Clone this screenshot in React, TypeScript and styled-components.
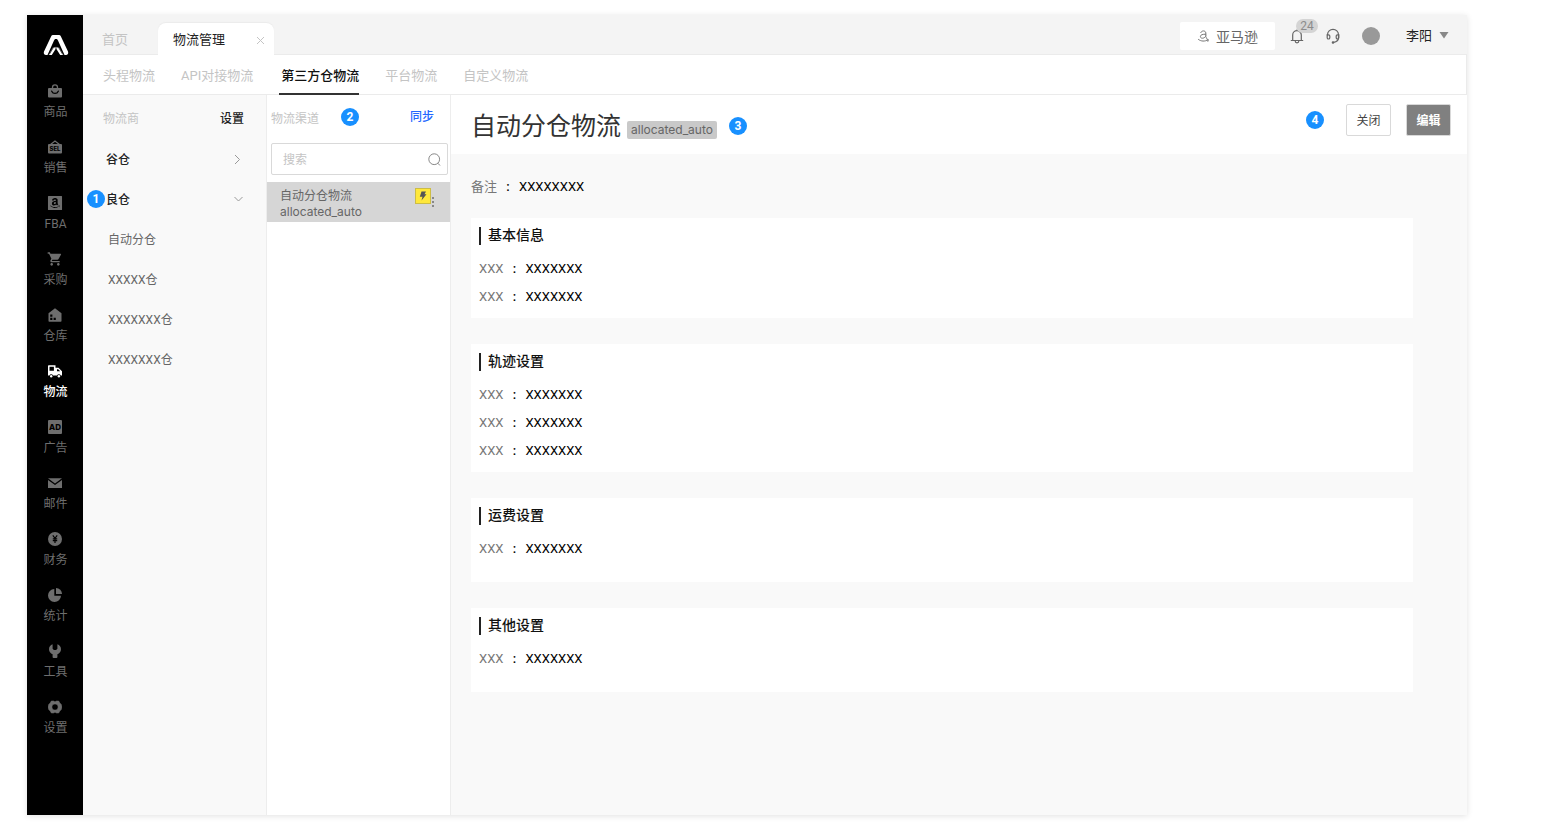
import React from 'react';
import styled, { createGlobalStyle, css } from 'styled-components';
import { AiFillAmazonSquare } from 'react-icons/ai';
import { MdShoppingCart } from 'react-icons/md';

const GlobalStyle = createGlobalStyle`
  *, *::before, *::after { box-sizing: border-box; }
  body {
    margin: 0;
    background: #fff;
    color: #222;
    font-family: Roboto, "Noto Sans CJK SC", sans-serif;
    font-size: 12px;
    line-height: 16px;
  }
  button, input { font: inherit; color: inherit; }
  button { padding: 0; border: 0; background: none; cursor: pointer; }
  a { color: inherit; text-decoration: none; }
  h1, h2, dl, dd, dt { margin: 0; padding: 0; }
  svg { display: block; flex: none; }
`;

const Page = styled.div`
  padding: 15px 98px 22px 27px;
`;

const Frame = styled.div`
  display: flex;
  min-height: calc(100vh - 37px);
  background: #f9f9f9;
  box-shadow: 0 1px 6px rgba(0, 0, 0, 0.12);
`;

const Rail = styled.nav`
  flex: none;
  width: 56px;
  background: #000;
`;

const LogoLink = styled.a`
  display: flex;
  justify-content: center;
  height: 58px;
  padding: 20px 0 0 1px;
`;

const RailLink = styled.a<{ $active?: boolean }>`
  display: flex;
  flex-direction: column;
  align-items: center;
  gap: 6px;
  height: 56px;
  padding: 11px 0 0 1px;
  color: ${(p) => (p.$active ? '#fff' : '#6e6e6e')};
  font-weight: ${(p) => (p.$active ? 500 : 400)};
`;

const RailIcon = styled.span`
  display: flex;
  align-items: center;
  justify-content: center;
  width: 14px;
  height: 14px;
  margin-right: 1px;
`;

const Workspace = styled.div`
  display: flex;
  flex: 1;
  flex-direction: column;
  min-width: 0;
`;

const TopBar = styled.header`
  display: flex;
  justify-content: space-between;
  height: 40px;
  background: #f4f4f4;
  border-bottom: 1px solid #ebebeb;
`;

const PageTabs = styled.div`
  display: flex;
  align-items: flex-end;
  height: 40px;
`;

const HomeTab = styled.a`
  width: 75px;
  padding-left: 19px;
  color: #c4c4c4;
  font-size: 13px;
  line-height: 30px;
`;

const OpenTab = styled.div`
  display: flex;
  align-items: center;
  justify-content: space-between;
  width: 116px;
  height: 32px;
  padding: 2px 9px 0 15px;
  border-radius: 8px 8px 0 0;
  background: #fff;
  box-shadow: 0 -1px 1px #ebebeb;
  font-size: 13px;
`;

const TopTools = styled.div`
  display: flex;
  align-items: center;
  padding: 2px 18px 0 0;
  color: #666;
`;

const StoreButton = styled.button`
  display: flex;
  align-items: center;
  justify-content: center;
  gap: 6px;
  width: 95px;
  height: 28px;
  margin-right: 15px;
  padding-top: 3px;
  border-radius: 2px;
  background: #fff;
  font-size: 14px;
`;

const IconButton = styled.button`
  position: relative;
  width: 16px;
  height: 16px;
  margin-right: 20px;
`;

const CountBadge = styled.span`
  position: absolute;
  top: -9px;
  left: 6px;
  width: 22px;
  border-radius: 7px;
  background: #d4d4d4;
  color: #8c8c8c;
  line-height: 14px;
`;

const Avatar = styled.span`
  width: 18px;
  height: 18px;
  margin-right: 26px;
  border-radius: 50%;
  background: #999;
`;

const UserButton = styled.button`
  display: flex;
  align-items: center;
  gap: 7px;
  color: #222;
  font-size: 13px;
`;

const SubNav = styled.nav`
  display: flex;
  gap: 26px;
  height: 40px;
  padding-left: 20px;
  border: solid #ebebeb;
  border-width: 0 1px 1px 0;
  background: #fff;
`;

const SubLink = styled.a<{ $active?: boolean }>`
  height: 40px;
  color: #c4c4c4;
  font-size: 13px;
  line-height: 42px;
  ${(p) =>
    p.$active &&
    css`
      padding-left: 2px;
      border-bottom: 2px solid #333;
      color: #111;
      font-weight: 500;
    `}
`;

const Columns = styled.div`
  display: flex;
  flex: 1;
`;

const Column = styled.aside<{ $white?: boolean }>`
  flex: none;
  width: 184px;
  border-right: 1px solid #ededed;
  background: ${(p) => (p.$white ? '#fff' : '#f9f9f9')};
`;

const ColumnHead = styled.div<{ $left: number; $right: number }>`
  display: flex;
  align-items: center;
  gap: 22px;
  height: 44px;
  padding: 0 ${(p) => p.$right}px 0 ${(p) => p.$left}px;
`;

const Muted = styled.span`
  padding-top: 4px;
  color: #c4c4c4;
`;

const TextButton = styled.button<{ $primary?: boolean }>`
  margin-left: auto;
  padding-top: ${(p) => (p.$primary ? 0 : 4)}px;
  color: ${(p) => (p.$primary ? '#2468ff' : '#222')};
  font-weight: 500;
`;

const StepDot = styled.span`
  display: inline-block;
  flex: none;
  width: 18px;
  height: 18px;
  border-radius: 50%;
  background: #1890ff;
  color: #fff;
  font-weight: 700;
  line-height: 18px;
  text-align: center;
`;

const PinnedDot = styled(StepDot)`
  position: absolute;
  left: 4px;
  top: 11px;
`;

const ProviderRow = styled.button`
  position: relative;
  display: flex;
  align-items: center;
  justify-content: space-between;
  width: 100%;
  height: 40px;
  padding: 0 23px;
  font-weight: 500;
`;

const ProviderName = styled.span`
  padding-top: 2px;
`;

const WarehouseLink = styled.a`
  display: block;
  height: 40px;
  padding-left: 25px;
  color: #666;
  line-height: 42px;
`;

const SearchBox = styled.label`
  display: flex;
  align-items: center;
  height: 32px;
  margin: 4px 2px 7px 4px;
  padding: 0 6px 0 11px;
  border: 1px solid #d9d9d9;
  border-radius: 2px;
`;

const SearchInput = styled.input`
  flex: 1;
  min-width: 0;
  padding: 2px 0 0;
  border: 0;
  outline: 0;
  background: none;
  &::placeholder { color: #c4c4c4; opacity: 1; }
`;

const ChannelRow = styled.div`
  display: flex;
  height: 40px;
  padding: 6px 15px 0 13px;
  background: #d6d6d6;
`;

const ChannelName = styled.a`
  flex: 1;
  color: #666;
`;

const Code = styled.span`
  display: block;
  font-family: Inter, sans-serif;
`;

const BoltTag = styled.span`
  display: flex;
  align-items: center;
  justify-content: center;
  width: 16px;
  height: 16px;
  border: 1px solid #cdbd45;
  background: #ffe83b;
`;

const MoreButton = styled.button`
  width: 4px;
  height: 16px;
  margin: 6px 0 0;
`;

const Detail = styled.main`
  flex: 1;
  min-width: 0;
`;

const DetailHead = styled.div`
  display: flex;
  align-items: flex-start;
  justify-content: space-between;
  height: 59px;
  padding: 9px 16px 0 20px;
  background: #fff;
`;

const TitleGroup = styled.div`
  display: flex;
  align-items: center;
  height: 44px;
`;

const Title = styled.h1`
  padding-top: 2px;
  color: #333;
  font-size: 25px;
  font-weight: 400;
  line-height: 36px;
`;

const CodeTag = styled(Code)`
  height: 18px;
  margin: 8px 12px 0 6px;
  padding: 0 4px;
  border-radius: 2px;
  background: #c9c9c9;
  color: #666;
  line-height: 18px;
`;

const Actions = styled.div`
  display: flex;
  align-items: center;
`;

const ActionButton = styled.button<{ $filled?: boolean }>`
  width: 45px;
  height: 32px;
  padding-top: 2px;
  border: 1px solid #d9d9d9;
  border-radius: 2px;
  background: #fff;
  color: #444;
  ${(p) =>
    p.$filled &&
    css`
      margin-left: 15px;
      background: #808080;
      color: #fff;
      font-weight: 700;
    `}
`;

const ActionDot = styled(StepDot)`
  margin-right: 22px;
`;

const DetailBody = styled.div`
  display: flex;
  flex-direction: column;
  gap: 26px;
  padding: 19px 54px 24px 20px;
`;

const Fields = styled.dl`
  font-size: 13px;
`;

const FieldRow = styled.div`
  display: flex;
  line-height: 28px;
`;

const Label = styled.dt`
  color: #777;
  &::after {
    content: ":";
    display: inline-block;
    width: 22px;
    color: #000;
    font-weight: 500;
    text-align: center;
  }
`;

const Value = styled.dd`
  color: #000;
`;

const Remark = styled(Fields)`
  height: 19px;
`;

const Card = styled.section`
  min-height: 84px;
  padding: 9px 8px 7px;
  background: #fff;
`;

const CardTitle = styled.h2`
  height: 18px;
  margin: 0 0 10px;
  padding-left: 7px;
  border-left: 2px solid #222;
  color: #111;
  font-size: 14px;
  font-weight: 500;
  line-height: 16px;
`;

const Glyph = ({ children }: { children: React.ReactNode }) => (
  <svg width="14" height="14" viewBox="0 0 14 14" fill="currentColor" aria-hidden="true">
    {children}
  </svg>
);

const GlyphText = styled.text`
  font-family: Inter, sans-serif;
  font-weight: 800;
  text-anchor: middle;
  fill: #000;
`;

const railItems: { label: string; icon: React.ReactNode; active?: boolean }[] = [
  {
    label: '商品',
    icon: (
      <Glyph>
        <path d="M4.500 4.500V3.400a2.500 2.500 0 0 1 5 0V4.500" fill="none" stroke="currentColor" strokeWidth="1.300" />
        <rect y="4" width="14" height="9.600" rx="1" />
        <path d="M3.700 7.200c1.300 3 5.300 3 6.600 0" fill="none" stroke="#000" strokeWidth="1.300" strokeLinecap="round" />
      </Glyph>
    ),
  },
  {
    label: '销售',
    icon: (
      <Glyph>
        <path d="M2.500 4.500 7 1l4.500 3.500" fill="none" stroke="currentColor" strokeWidth="1.200" />
        <rect y="4" width="14" height="9.600" rx="1" />
        <GlyphText x="7" y="11.200" fontSize="6">SEL</GlyphText>
      </Glyph>
    ),
  },
  { label: 'FBA', icon: <AiFillAmazonSquare size={18} /> },
  { label: '采购', icon: <MdShoppingCart size={16} /> },
  {
    label: '仓库',
    icon: (
      <Glyph>
        <path fillRule="evenodd" d="M.5 5.200 7 .2l6.500 5V13a.8.8 0 0 1-.8.8H1.300a.8.8 0 0 1-.8-.8ZM2.200 6.500v2.200h2.200V6.500ZM2.200 9.800V12h2.200V9.800ZM5.600 9.800V12h2.200V9.800Z" />
      </Glyph>
    ),
  },
  {
    label: '物流',
    active: true,
    icon: (
      <Glyph>
        <path fillRule="evenodd" d="M.8 1.200h6.700V3.800h3L14 7.200V11.500h-1.300a1.900 1.900 0 0 0-3.600 0H5a1.900 1.900 0 0 0-3.600 0H0V2a.8.8 0 0 1 .8-.8ZM1.500 2.700v4h4.400v-4ZM9 5.300v2h3.200L10.200 5.300Z" />
        <circle cx="3.200" cy="12.200" r="1.200" />
        <circle cx="10.900" cy="12.200" r="1.200" />
      </Glyph>
    ),
  },
  {
    label: '广告',
    icon: (
      <Glyph>
        <rect width="14" height="14" rx="1" />
        <GlyphText x="7" y="9.900" fontSize="8">AD</GlyphText>
      </Glyph>
    ),
  },
  {
    label: '邮件',
    icon: (
      <Glyph>
        <path d="M0 2.200h14L7 7.400ZM0 3.900l7 5 7-5V12H0Z" />
      </Glyph>
    ),
  },
  {
    label: '财务',
    icon: (
      <Glyph>
        <circle cx="7" cy="7" r="7" />
        <path d="m4.800 3.300 2.200 3 2.200-3M7 6.300v4.600M4.800 6.800h4.400M4.800 8.700h4.400" fill="none" stroke="#000" strokeWidth="1.200" />
      </Glyph>
    ),
  },
  {
    label: '统计',
    icon: (
      <Glyph>
        <path d="M6.300 1v6.700H13A6.500 6.500 0 1 1 6.300 1Z" />
        <path d="M8 0a6 6 0 0 1 6 6H8Z" />
      </Glyph>
    ),
  },
  {
    label: '工具',
    icon: (
      <Glyph>
        <path d="M4.600.3v4.500L5.900 6h2.200l1.300-1.200V.3C11.700 1 13 3 13 5.200c0 2.300-1.500 4.200-3.600 5V13a1 1 0 0 1-1 1H5.600a1 1 0 0 1-1-1v-2.800C2.500 9.400 1 7.500 1 5.200 1 3 2.300 1 4.600.3Z" />
      </Glyph>
    ),
  },
  {
    label: '设置',
    icon: (
      <Glyph>
        <path
          fillRule="evenodd"
          d="M3.300 1h2.200L7 1.800 8.500 1h2.200l1.100 2 1.400 1.200L14 7l-.8 2.800-1.400 1.200-1.100 2H8.500L7 12.200 5.500 13H3.300l-1.100-2L.8 9.800 0 7l.8-2.800L2.200 3ZM7 3.900a3.100 3.100 0 1 0 0 6.200 3.100 3.100 0 0 0 0-6.200Z"
          stroke="currentColor"
          strokeWidth=".5"
          strokeLinejoin="round"
        />
      </Glyph>
    ),
  },
];

const subLinks = ['头程物流', 'API对接物流', '第三方仓物流', '平台物流', '自定义物流'];
const warehouses = ['自动分仓', 'XXXXX仓', 'XXXXXXX仓', 'XXXXXXX仓'];
const sections = [
  { title: '基本信息', rows: 2 },
  { title: '轨迹设置', rows: 3 },
  { title: '运费设置', rows: 1 },
  { title: '其他设置', rows: 1 },
];

const Logo = () => (
  <svg width="26" height="20" viewBox="0 0 26 20" fill="#fff">
    <path d="M8.200 1.200A2 2 0 0 1 10 0h6a2 2 0 0 1 1.800 1.200L25 16.500c.8 2-.4 3.500-2 3.500h-1.500L15 5.500 14 4h-2l-1 1.500L4.500 20H3c-1.600 0-2.800-1.500-2-3.500Z" />
    <path d="M12.600 11.800 10 12.500 5.600 20h3.200L12.600 14ZM13.400 11.800l2.600.7 4.400 7.500h-3.200L13.400 14Z" />
    <path d="m6.200 19.500 4.200-7L13 11.500l2.600 1 4.200 7" fill="none" stroke="#000" strokeWidth=".7" />
  </svg>
);

const Chevron = ({ d }: { d: string }) => (
  <svg width="9" height="9" viewBox="0 0 9 9" fill="none" stroke="#999" aria-hidden="true">
    <path d={d} />
  </svg>
);

export default function App() {
  return (
    <Page>
      <GlobalStyle />
      <Frame>
        <Rail>
          <LogoLink href="#" aria-label="首页"><Logo /></LogoLink>
          {railItems.map((item) => (
            <RailLink key={item.label} href="#" $active={item.active}>
              <RailIcon>{item.icon}</RailIcon>
              {item.label}
            </RailLink>
          ))}
        </Rail>
        <Workspace>
          <TopBar>
            <PageTabs>
              <HomeTab href="#">首页</HomeTab>
              <OpenTab>
                物流管理
                <button aria-label="关闭标签">
                  <svg width="9" height="9" viewBox="0 0 9 9" stroke="#c4c4c4"><path d="m1 1 7 7M8 1 1 8" /></svg>
                </button>
              </OpenTab>
            </PageTabs>
            <TopTools>
              <StoreButton>
                <svg width="13" height="16" viewBox="0 0 13 16" fill="none" stroke="#777" strokeLinecap="round" aria-hidden="true">
                  <path d="M3.800 3.600C4.200 1.300 8.800 1.200 8.800 4v3.600c0 .8.300 1.200.9 1.500M8.800 5.200C5.500 5.200 3.400 5.700 3.400 7.600c0 2.200 4.200 2.400 5.400-.6M1.500 10.500c2.600 2 6.300 2.100 9.300.5M9.700 9.900l1.600.7-.4 1.700" />
                </svg>
                亚马逊
              </StoreButton>
              <IconButton aria-label="通知">
                <svg width="14" height="16" viewBox="0 0 14 16" fill="none" stroke="#666" strokeWidth="1.200">
                  <path d="M2.700 12.500V7a4.300 4.300 0 0 1 8.600 0v5.500M.8 12.500h12.400M7 2.700V1.500M5.200 13a1.800 1.800 0 0 0 3.600 0" />
                </svg>
                <CountBadge>24</CountBadge>
              </IconButton>
              <IconButton aria-label="客服">
                <svg width="14" height="16" viewBox="0 0 14 16" fill="none" stroke="#666" strokeWidth="1.200">
                  <path d="M1.500 7.500V6.800a5.500 5.500 0 0 1 11 0V9.500c0 2.500-1.800 4.400-4.800 4.900" />
                  <path d="M1.200 6.800h1.300q1.300 0 1.300 1.300v1.600q0 1.300-1.300 1.300-1.300 0-1.300-1.300ZM12.800 6.800h-1.300q-1.300 0-1.300 1.300v1.600q0 1.300 1.300 1.300 1.300 0 1.300-1.300Z" />
                  <circle cx="7" cy="14.500" r=".7" fill="#666" />
                </svg>
              </IconButton>
              <Avatar />
              <UserButton>
                李阳
                <svg width="10" height="7" viewBox="0 0 10 7" fill="#888"><path d="M.5 0h9L5 6.500Z" /></svg>
              </UserButton>
            </TopTools>
          </TopBar>
          <SubNav>
            {subLinks.map((name, i) => (
              <SubLink key={name} href="#" $active={i === 2}>{name}</SubLink>
            ))}
          </SubNav>
          <Columns>
            <Column>
              <ColumnHead $left={20} $right={22}>
                <Muted>物流商</Muted>
                <TextButton>设置</TextButton>
              </ColumnHead>
              <ProviderRow>
                <ProviderName>谷仓</ProviderName>
                <Chevron d="m1 0 4.500 4.500L1 9" />
              </ProviderRow>
              <ProviderRow>
                <PinnedDot>1</PinnedDot>
                <ProviderName>良仓</ProviderName>
                <Chevron d="m.5 2 4 4 4-4" />
              </ProviderRow>
              {warehouses.map((name, i) => (
                <WarehouseLink key={i} href="#">{name}</WarehouseLink>
              ))}
            </Column>
            <Column $white>
              <ColumnHead $left={4} $right={16}>
                <Muted>物流渠道</Muted>
                <StepDot>2</StepDot>
                <TextButton $primary>同步</TextButton>
              </ColumnHead>
              <SearchBox>
                <SearchInput type="search" placeholder="搜索" aria-label="搜索" />
                <svg width="13" height="13" viewBox="0 0 13 13" fill="none" stroke="#888">
                  <circle cx="6.200" cy="6.200" r="5.400" />
                  <path d="m9.800 10.200 2.200 2.300" />
                </svg>
              </SearchBox>
              <ChannelRow>
                <ChannelName href="#">自动分仓物流<Code>allocated_auto</Code></ChannelName>
                <BoltTag>
                  <svg width="8" height="10" viewBox="0 0 8 10" fill="#555"><path d="M2.500.5h4.500L5.500 3.200H7.500L2.500 9.500l1-3.700H.8Z" /></svg>
                </BoltTag>
                <MoreButton aria-label="更多">
                  <svg width="4" height="12" viewBox="0 0 4 12" fill="#888">
                    <path d="M1 1h2v2H1zM1 5h2v2H1zM1 9h2v2H1z" />
                  </svg>
                </MoreButton>
              </ChannelRow>
            </Column>
            <Detail>
              <DetailHead>
                <TitleGroup>
                  <Title>自动分仓物流</Title>
                  <CodeTag>allocated_auto</CodeTag>
                  <StepDot>3</StepDot>
                </TitleGroup>
                <Actions>
                  <ActionDot>4</ActionDot>
                  <ActionButton>关闭</ActionButton>
                  <ActionButton $filled>编辑</ActionButton>
                </Actions>
              </DetailHead>
              <DetailBody>
                <Remark>
                  <FieldRow><Label>备注</Label><Value>XXXXXXXX</Value></FieldRow>
                </Remark>
                {sections.map((section) => (
                  <Card key={section.title}>
                    <CardTitle>{section.title}</CardTitle>
                    <Fields>
                      {Array.from({ length: section.rows }, (_, i) => (
                        <FieldRow key={i}><Label>XXX</Label><Value>XXXXXXX</Value></FieldRow>
                      ))}
                    </Fields>
                  </Card>
                ))}
              </DetailBody>
            </Detail>
          </Columns>
        </Workspace>
      </Frame>
    </Page>
  );
}
